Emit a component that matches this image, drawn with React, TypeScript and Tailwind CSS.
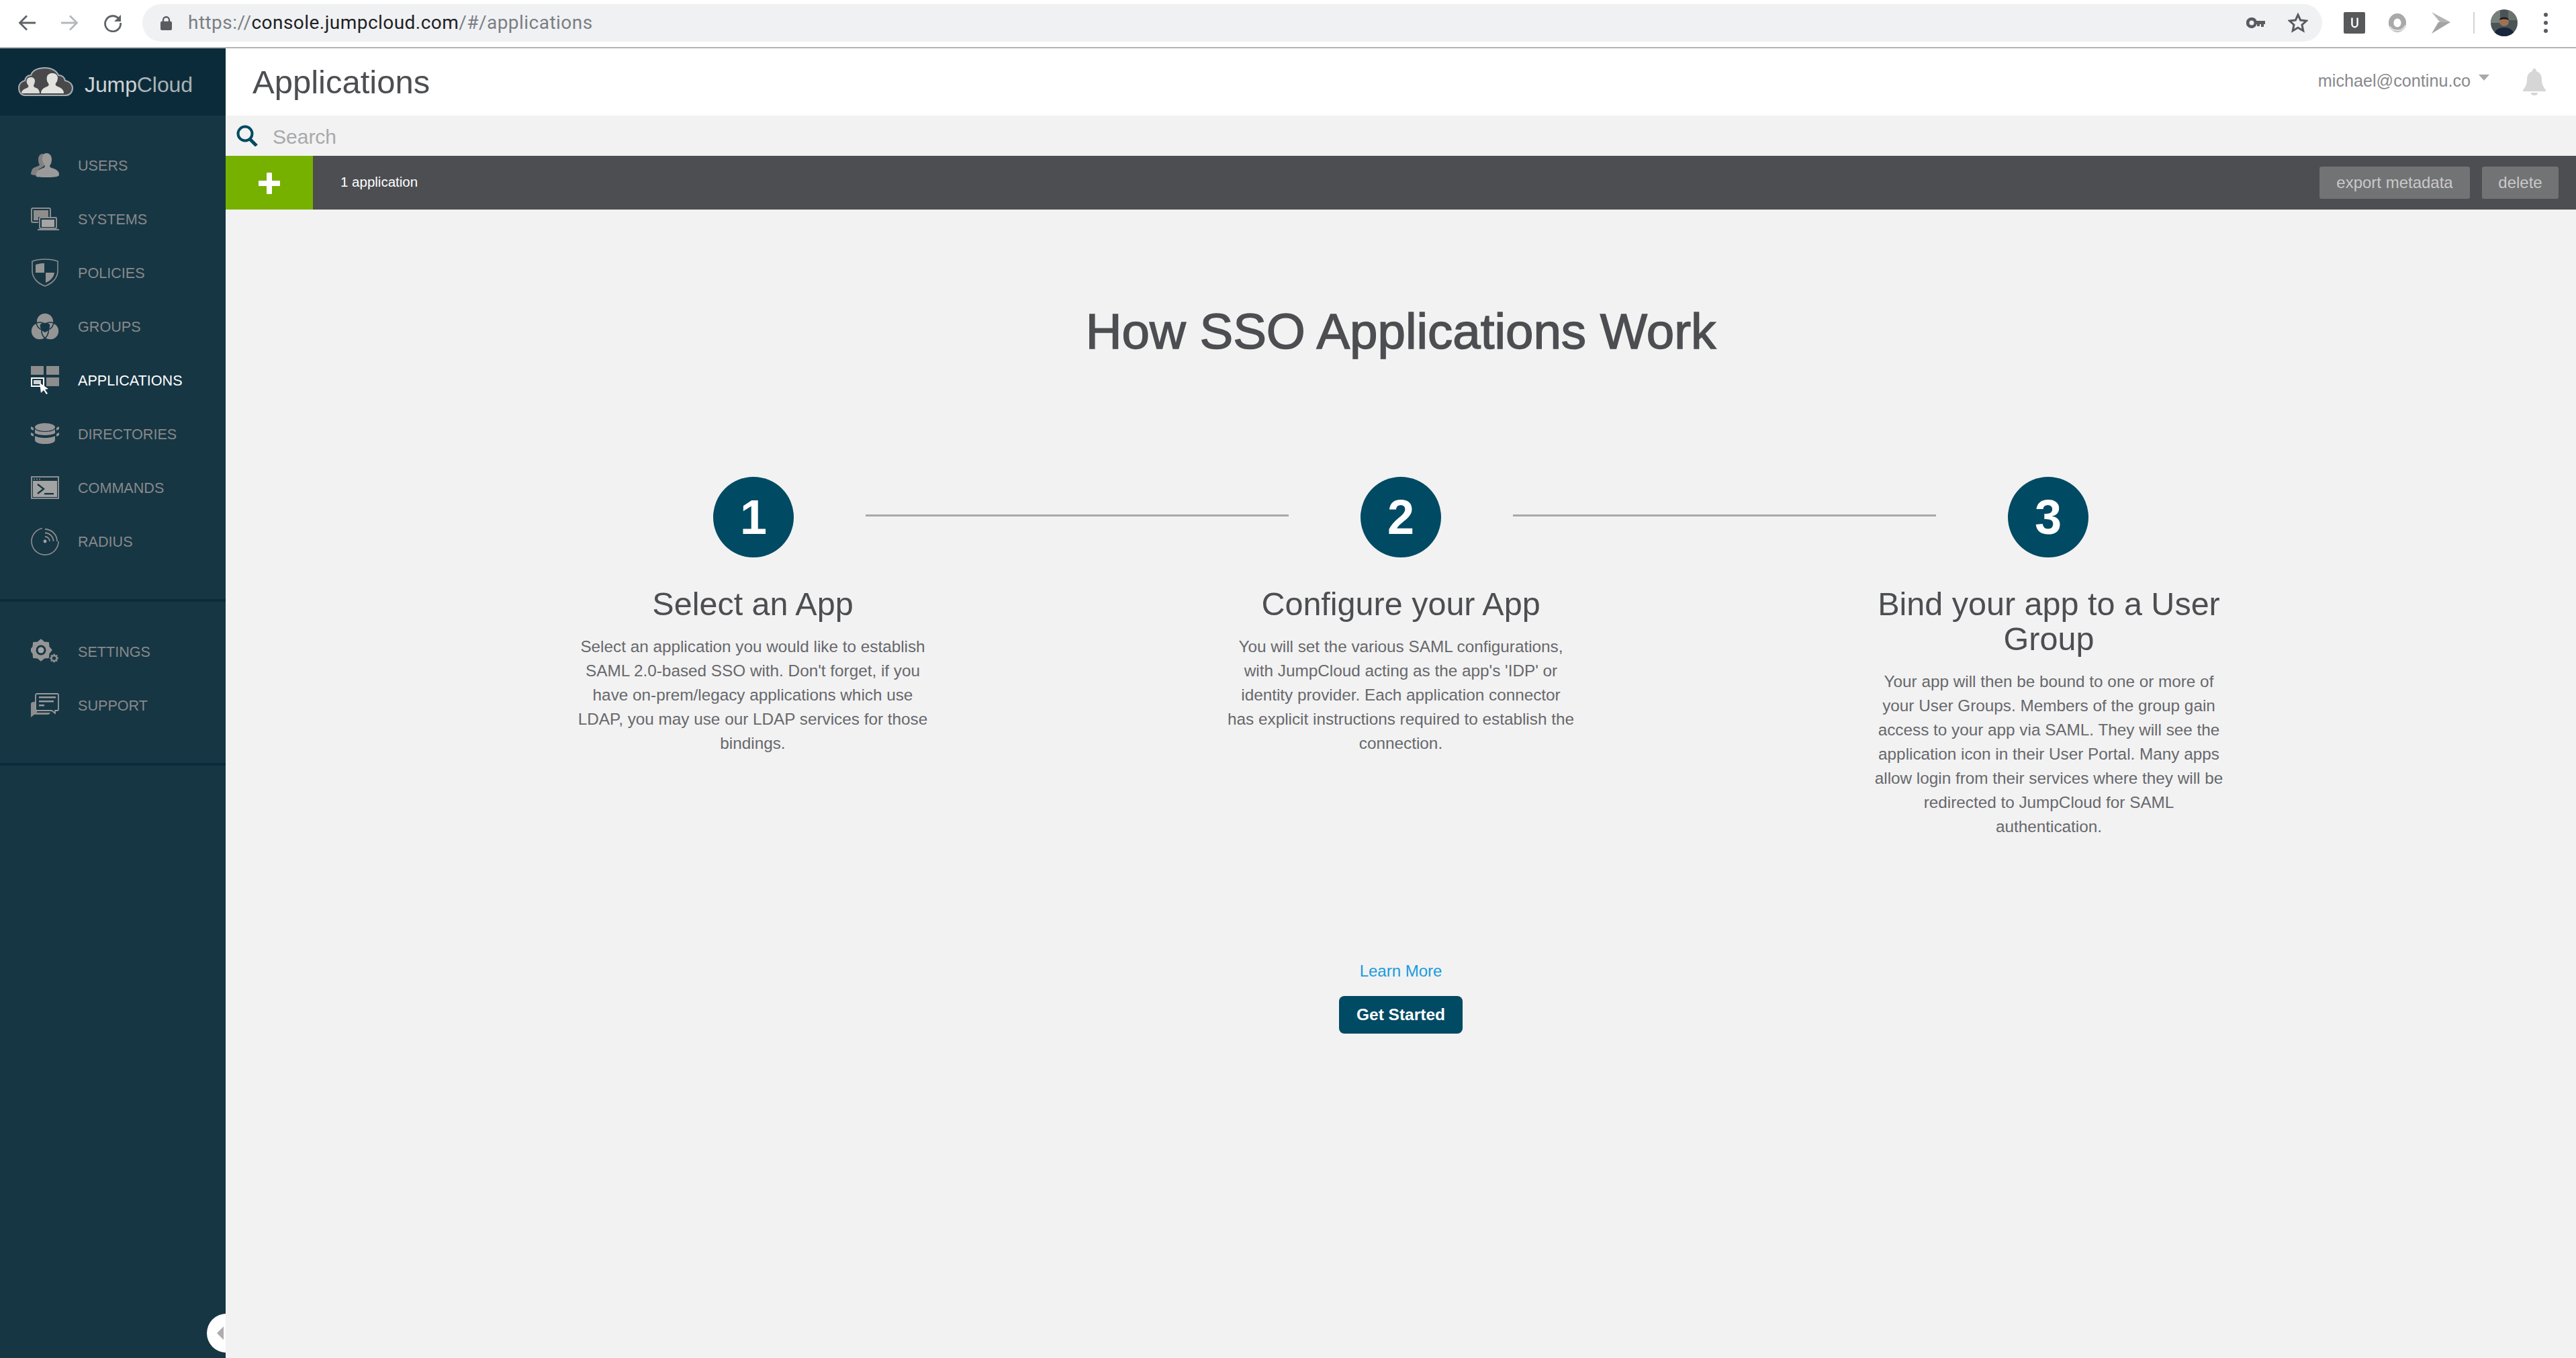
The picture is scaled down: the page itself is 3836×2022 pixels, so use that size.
import React from 'react'

const navIconClass = 'w-[42px] h-[42px] shrink-0'

function UsersIcon() {
  return (
    <svg viewBox="0 0 42 36" className={navIconClass} fill="#9a9a9a">
      <path fill="#808080" d="M18 1c-5 0-7 4-7 9 0 3 1 6 2 8-3 2-9 3-11 6-1 2-2 6-2 7 0 1 4 2 8 2l4-9 8-5V2z" />
      <path d="M23 0c5 0 8 4 8 9 0 4-1 7-3 10 0 2 2 3 6 4 5 2 8 4 8 9 0 3-4 4-20 4S7 35 8 32c0-5 3-7 8-9 3-1 5-2 5-4-2-3-4-6-4-10 0-5 2-9 6-9z" />
    </svg>
  )
}

function SystemsIcon() {
  return (
    <svg viewBox="0 0 42 34" className={navIconClass}>
      <rect x="1" y="1" width="28" height="21" rx="2" fill="none" stroke="#8d8d8d" strokeWidth="2" />
      <rect x="4" y="4" width="22" height="15" fill="#8d8d8d" />
      <rect x="11" y="14" width="26" height="17" fill="#173644" />
      <rect x="13" y="15" width="25" height="16" rx="1" fill="none" stroke="#8d8d8d" strokeWidth="2" />
      <rect x="16" y="18" width="19" height="11" fill="#a5a5a5" />
      <rect x="10" y="32" width="32" height="2" fill="#8d8d8d" />
    </svg>
  )
}

function PoliciesIcon() {
  return (
    <svg viewBox="0 0 42 42" className={navIconClass}>
      <path d="M21 1c7 0 14 1 19 3v14c0 11-8 19-19 23C10 37 2 29 2 18V4C7 2 14 1 21 1z" fill="none" stroke="#8d8d8d" strokeWidth="1.6" />
      <path d="M7 9c4-1 7-2 13-2v14H7z" fill="#959595" />
      <path d="M22 21h13c-1 7-6 12-13 15z" fill="#959595" />
    </svg>
  )
}

function GroupsIcon() {
  return (
    <svg viewBox="0 0 42 40" className={navIconClass}>
      <circle cx="21" cy="13" r="13" fill="#959595" />
      <circle cx="13" cy="27" r="13" fill="#959595" />
      <circle cx="29" cy="27" r="13" fill="#959595" />
      <circle cx="21" cy="13" r="13" fill="none" stroke="#173644" strokeWidth="1.600" />
      <circle cx="13" cy="27" r="13" fill="none" stroke="#173644" strokeWidth="1.600" />
      <circle cx="29" cy="27" r="13" fill="none" stroke="#173644" strokeWidth="1.600" />
      <path d="M14 17c4-3 10-3 14 0 1 4-1 9-7 12-6-3-8-8-7-12z" fill="#173644" />
    </svg>
  )
}

function ApplicationsIcon() {
  return (
    <svg viewBox="0 0 42 42" className={navIconClass}>
      <rect x="0" y="0" width="19" height="13" fill="#8d8d8d" />
      <rect x="23" y="0" width="19" height="13" fill="#8d8d8d" />
      <rect x="23" y="17" width="19" height="13" fill="#8d8d8d" />
      <rect x="1" y="18" width="18" height="12" fill="none" stroke="#fff" strokeWidth="2" />
      <rect x="4" y="21" width="11" height="6" fill="#cfd3d5" />
      <path d="M13 25l13 9-5 1 4 6-2 1-4-6-4 4z" fill="#fff" />
    </svg>
  )
}

function DirectoriesIcon() {
  return (
    <svg viewBox="0 0 42 32" className={navIconClass} fill="#959595">
      <ellipse cx="21" cy="6" rx="15" ry="6" />
      <path d="M6 9c3 3 9 4 15 4s12-1 15-4v6c-3 2-9 3-15 3S9 17 6 15z" />
      <path d="M6 19c3 2 9 3 15 3s12-1 15-3v6c0 4-7 6-15 6S6 29 6 25z" />
      <path d="M0 5l4 2v4l-4-2zM42 5l-4 2v4l4-2zM0 14l4 2v4l-4-2zM42 14l-4 2v4l4-2z" />
    </svg>
  )
}

function CommandsIcon() {
  return (
    <svg viewBox="0 0 42 34" className={navIconClass}>
      <rect x="1" y="1" width="40" height="32" fill="none" stroke="#8d8d8d" strokeWidth="2" />
      <rect x="3" y="7" width="36" height="24" fill="#a3a3a3" />
      <circle cx="5" cy="4.5" r="1" fill="#8d8d8d" />
      <circle cx="9" cy="4.5" r="1" fill="#8d8d8d" />
      <circle cx="13" cy="4.5" r="1" fill="#8d8d8d" />
      <path d="M10 12l9 7-9 7" fill="none" stroke="#173644" strokeWidth="2.4" />
      <rect x="20" y="25" width="14" height="2.4" fill="#173644" />
    </svg>
  )
}

function RadiusIcon() {
  return (
    <svg viewBox="0 0 42 42" className={navIconClass} fill="none" stroke="#8d8d8d">
      <path d="M17 1.500A20 20 0 1 0 41 21" strokeWidth="1.6" />
      <circle cx="21" cy="21" r="2.400" fill="#a3a3a3" stroke="none" />
      <path d="M21 14a7 7 0 0 1 7 7M21 8.500a12.500 12.500 0 0 1 12.500 12.500M21 3a18 18 0 0 1 18 18" strokeWidth="1.800" />
    </svg>
  )
}

function gearPath(cx: number, cy: number, outer: number, inner: number, teeth: number) {
  const points: string[] = []
  for (let i = 0; i < teeth * 2; i++) {
    const a = (i / (teeth * 2)) * Math.PI * 2
    const r = i % 2 === 0 ? outer : inner
    points.push(`${(cx + Math.cos(a) * r).toFixed(2)},${(cy + Math.sin(a) * r).toFixed(2)}`)
  }
  return points.join(' ')
}

function SettingsIcon() {
  return (
    <svg viewBox="0 0 42 34" className={navIconClass}>
      <polygon points={gearPath(15, 15, 15.500, 12.500, 8)} fill="#959595" strokeLinejoin="round" stroke="#959595" strokeWidth="2" />
      <circle cx="15" cy="15" r="7.500" fill="#173644" />
      <circle cx="15" cy="15" r="4.500" fill="#a3a3a3" />
      <polygon points={gearPath(34.500, 27, 7, 5.200, 8)} fill="#8a8a8a" />
      <circle cx="34.500" cy="27" r="2.600" fill="#173644" />
    </svg>
  )
}

function SupportIcon() {
  return (
    <svg viewBox="0 0 42 36" className={navIconClass}>
      <path d="M5 13c-3 0-5 1-5 3v20l5-4h20c2 0 3-1 4-3H9V13z" fill="#8d8d8d" />
      <path d="M9 1h30c1 0 2 1 2 2v21c0 1-1 2-2 2h-3v4l-5-4H9c-1 0-2-1-2-2V3c0-1 1-2 2-2z" fill="#173644" stroke="#9a9a9a" strokeWidth="1.800" />
      <rect x="12" y="5" width="25" height="2.500" fill="#9a9a9a" />
      <rect x="12" y="11" width="22" height="2.500" fill="#9a9a9a" />
      <rect x="12" y="17" width="8" height="2.500" fill="#9a9a9a" />
    </svg>
  )
}

function CloudLogo() {
  return (
    <svg viewBox="0 0 82 44" className="w-[82px] h-[44px] shrink-0">
      <path d="M10 42C4 42 1 37 1 31c0-6 4-10 9-11 1-5 4-8 9-8 2-6 8-11 22-11 8 0 16 4 19 11 5 0 9 3 10 8 6 1 11 5 11 11 0 6-4 11-10 11z" fill="#49494c" stroke="#a6b0b3" strokeWidth="2" />
      <path d="M5 39c0-4 3-6 8-8 2-1 3-2 2-4-2-2-3-5-2-8 1-3 3-4 6-4s6 2 6 5c0 3-1 5-2 7 0 2 1 3 4 4 3 1 5 4 5 8z" fill="#dcdcd8" />
      <path d="M34 39c0-5 3-8 9-10 3-1 3-3 2-5-2-2-3-6-2-10 1-3 4-5 8-5s7 2 8 6c0 4-1 7-3 9-1 2 0 4 3 5 6 2 9 5 9 10z" fill="#e3e3df" />
    </svg>
  )
}

function BackArrow({ color }: { color: string }) {
  return (
    <svg viewBox="0 0 26 24" className="w-[26px] h-[24px]" fill="none" stroke={color} strokeWidth="2.800">
      <path d="M26 12H3M13 1.500L2.500 12 13 22.500" />
    </svg>
  )
}

function ToolbarLeft() {
  return (
    <div className="flex items-center -mt-[2px]">
      <div className="ml-[27px]"><BackArrow color="#5f6368" /></div>
      <div className="ml-[38px] rotate-180"><BackArrow color="#b6b8bb" /></div>
      <svg viewBox="0 0 28 28" className="ml-[37px] w-[28px] h-[28px]" fill="none">
        <path d="M23 8A11.500 11.500 0 1 0 25.500 14" stroke="#5f6368" strokeWidth="2.800" />
        <path d="M26 2v10H16z" fill="#5f6368" />
      </svg>
    </div>
  )
}

function Browser() {
  return (
    <div className="h-[72px] shrink-0 bg-white border-b-2 border-[#b4b4b4] flex items-center">
      <ToolbarLeft />
      <div className="ml-[30px] w-[3246px] h-[56px] rounded-[28px] bg-[#f0f1f3] flex items-center -mt-[2px]">
        <svg viewBox="0 0 18 22" className="ml-[27px] w-[17px] h-[21px]" fill="#5a5b60">
          <path d="M3 9V6a6 6 0 0 1 12 0v3h-2.500V6a3.500 3.500 0 0 0-7 0v3z" />
          <rect x="0" y="8" width="18" height="14" rx="2" />
        </svg>
        <div className="ml-[24px] text-[28px] tracking-[0.46px] font-['Roboto',sans-serif] text-[#7b7e83] whitespace-nowrap">
          https://<span className="text-[#202124]">console.jumpcloud.com</span>/#/applications
        </div>
        <div className="ml-auto flex items-center">
          <svg viewBox="0 0 28 16" className="w-[28px] h-[16px]" fill="#5a5b60">
            <path d="M8 0a8 8 0 0 1 7.500 5H28v5h-2v4h-4v-4h-2v3h-4v-3h-.5A8 8 0 1 1 8 0zm0 4.500a3.500 3.500 0 1 0 0 7 3.500 3.500 0 0 0 0-7z" />
          </svg>
          <svg viewBox="0 0 30 30" className="ml-[34px] mr-[21px] w-[30px] h-[30px]" fill="none" stroke="#5a5b60" strokeWidth="3">
            <path d="M15 3l3.700 8 8.800 1-6.500 6 1.800 8.700L15 22.200l-7.800 4.500L9 18l-6.500-6 8.800-1z" />
          </svg>
        </div>
      </div>
      <div className="flex items-center -mt-[2px]">
        <div className="ml-[32px] w-[32px] h-[32px] rounded-[2px] bg-[#58595b] flex items-center justify-center">
          <svg viewBox="0 0 16 20" className="w-[13px] h-[19px]" fill="none" stroke="#fff" strokeWidth="3">
            <path d="M3 0v12a5 5 0 0 0 10 0V0" />
          </svg>
        </div>
        <svg viewBox="0 0 30 32" className="ml-[34px] w-[28px] h-[30px]" fill="none">
          <ellipse cx="15" cy="16" rx="10" ry="11" stroke="#a9a9a9" strokeWidth="8" />
          <path d="M3 22c3 8 20 10 25-2" stroke="#dcdcdc" strokeWidth="3" />
        </svg>
        <svg viewBox="0 0 30 32" className="ml-[36px] w-[30px] h-[32px]">
          <path d="M1 0l28 15-14 2z" fill="#b5b5b5" />
          <path d="M29 15L1 32l10-17z" fill="#a3a3a3" />
        </svg>
        <div className="ml-[33px] w-[2px] h-[32px] bg-[#d2d3d5]" />
        <svg viewBox="0 0 40 40" className="ml-[24px] w-[40px] h-[40px] rounded-full">
          <rect width="40" height="40" fill="#4a5456" />
          <rect x="0" y="0" width="14" height="20" fill="#77807c" />
          <rect x="26" y="0" width="14" height="16" fill="#6c716c" />
          <path d="M5 40c0-9 6-13 15-13s15 4 15 13z" fill="#17263d" />
          <circle cx="20" cy="18" r="7" fill="#9c7257" />
          <path d="M13 16c0-6 14-6 14 0-4-2-10-2-14 0z" fill="#1e1a18" />
        </svg>
        <div className="ml-[39px] flex flex-col gap-[6px]">
          <span className="w-[6px] h-[6px] rounded-full bg-[#5a5b60]" />
          <span className="w-[6px] h-[6px] rounded-full bg-[#5a5b60]" />
          <span className="w-[6px] h-[6px] rounded-full bg-[#5a5b60]" />
        </div>
      </div>
    </div>
  )
}

const mainNav = [
  { label: 'USERS', icon: <UsersIcon /> },
  { label: 'SYSTEMS', icon: <SystemsIcon /> },
  { label: 'POLICIES', icon: <PoliciesIcon /> },
  { label: 'GROUPS', icon: <GroupsIcon /> },
  { label: 'APPLICATIONS', icon: <ApplicationsIcon />, active: true },
  { label: 'DIRECTORIES', icon: <DirectoriesIcon /> },
  { label: 'COMMANDS', icon: <CommandsIcon /> },
  { label: 'RADIUS', icon: <RadiusIcon /> },
]

const bottomNav = [
  { label: 'SETTINGS', icon: <SettingsIcon /> },
  { label: 'SUPPORT', icon: <SupportIcon /> },
]

function NavItem({ label, icon, active }: { label: string; icon: React.ReactNode; active?: boolean }) {
  return (
    <div className="h-[80px] flex items-center pl-[46px]">
      {icon}
      <span className={`ml-[28px] mt-[2px] text-[21.600px] ${active ? 'text-white' : 'text-[#87898b]'}`}>{label}</span>
    </div>
  )
}

function Sidebar() {
  return (
    <aside className="relative w-[336px] shrink-0 bg-[#173644] flex flex-col">
      <div className="h-[100px] bg-[#0c2b3a] flex items-center pl-[27px]">
        <CloudLogo />
        <span className="ml-[17px] mt-[8px] text-[32px] text-[#cfd3d5] tracking-[-0.1px]">
          Jump<span className="text-[#a9b2b6]">Cloud</span>
        </span>
      </div>
      <nav className="pt-[34px] pb-[46px] border-b-4 border-[#0c2b3a]">
        {mainNav.map(item => (
          <NavItem key={item.label} {...item} />
        ))}
      </nav>
      <nav className="pt-[34px] pb-[46px] border-b-4 border-[#0c2b3a]">
        {bottomNav.map(item => (
          <NavItem key={item.label} {...item} />
        ))}
      </nav>
      <div className="absolute right-0 top-[1884px] w-[28px] h-[58px] overflow-hidden">
        <div className="w-[58px] h-[58px] rounded-full bg-white flex items-center pl-[15px]">
          <div className="w-0 h-0 border-y-[10px] border-y-transparent border-r-[10px] border-r-[#adadad]" />
        </div>
      </div>
    </aside>
  )
}

function Step({ title, children }: { title: string; children: React.ReactNode }) {
  return (
    <div className="w-[965px] flex flex-col items-center text-center">
      <h2 className="w-[530px] text-[48.500px] leading-[52px] text-[#4d4e52]">{title}</h2>
      <p className="mt-[20px] w-[524px] text-[24.300px] leading-[36px] text-[#67686c]">{children}</p>
    </div>
  )
}

function Circle({ n }: { n: number }) {
  return (
    <div className="w-[120px] h-[120px] rounded-full bg-[#004a63] flex items-center justify-center text-white text-[72px] font-bold shrink-0">
      {n}
    </div>
  )
}

function Connector() {
  return <div className="w-[630px] h-[3px] mx-[107px] bg-[#a8a8a8] -mt-[6px] shrink-0" />
}

export default function App() {
  return (
    <div className="w-[3836px] h-[2022px] overflow-hidden flex flex-col bg-white font-['Liberation_Sans',Arial,sans-serif]">
      <Browser />
      <div className="flex flex-1 min-h-0">
        <Sidebar />
        <main className="flex-1 flex flex-col bg-[#f2f2f2]">
          <header className="h-[100px] shrink-0 bg-white flex items-center pl-[40px] pr-[45px]">
            <h1 className="mt-[2px] text-[49px] text-[#4d4e52]">Applications</h1>
            <div className="ml-auto flex items-center">
              <span className="text-[25.200px] text-[#88898c] -mt-[2px]">michael@continu.co</span>
              <div className="ml-[12px] -mt-[14px] w-0 h-0 border-x-[8px] border-x-transparent border-t-[9px] border-t-[#a8a8a8]" />
              <svg viewBox="0 0 34 40" className="ml-[50px] w-[34px] h-[40px]" fill="#d6d6d6">
                <path d="M17 0c2 0 3 2 3 4 6 2 8 7 8 13 0 6 2 10 6 15v2H0v-2c4-5 6-9 6-15 0-6 2-11 8-13 0-2 1-4 3-4z" />
                <path d="M12 36h10c0 3-2 4-5 4s-5-1-5-4z" />
              </svg>
            </div>
          </header>
          <div className="h-[60px] shrink-0 flex items-center pl-[16px]">
            <svg viewBox="0 0 32 32" className="w-[32px] h-[32px]" fill="none" stroke="#004a63" strokeWidth="4">
              <circle cx="13" cy="13" r="10.500" />
              <path d="M20 21l10 10" strokeWidth="5" />
            </svg>
            <span className="ml-[22px] mt-[2px] text-[30px] text-[#a8a9ab]">Search</span>
          </div>
          <div className="h-[80px] shrink-0 bg-[#4d4e52] flex items-center pr-[26px]">
            <div className="w-[130px] h-full bg-[#76b100] flex items-center justify-center">
              <svg viewBox="0 0 32 32" className="mt-[2px] w-[32px] h-[32px]" fill="#fff">
                <path d="M12 1a2 2 0 0 1 2-1h4a2 2 0 0 1 2 1v11h11a1 1 0 0 1 1 1v6a1 1 0 0 1-1 1H20v11a1 1 0 0 1-1 1h-6a1 1 0 0 1-1-1V20H1a1 1 0 0 1-1-1v-6a1 1 0 0 1 1-1h11z" />
              </svg>
            </div>
            <span className="ml-[41px] text-[20.500px] text-white -mt-[1px]">1 application</span>
            <button className="ml-auto h-[48px] w-[224px] rounded-[3px] bg-[#727375] text-[#c9c9c9] text-[24px]">export metadata</button>
            <button className="ml-[18px] h-[48px] w-[114px] rounded-[3px] bg-[#727375] text-[#c9c9c9] text-[24px]">delete</button>
          </div>
          <section className="flex flex-col items-center pt-[140px]">
            <h2 className="text-[74.500px] leading-[84px] text-[#4d4e52] [-webkit-text-stroke:1.500px_#4d4e52]">How SSO Applications Work</h2>
            <div className="mt-[174px] flex items-center">
              <Circle n={1} />
              <Connector />
              <Circle n={2} />
              <Connector />
              <Circle n={3} />
            </div>
            <div className="mt-[43px] flex items-start justify-center">
              <Step title="Select an App">
                Select an application you would like to establish SAML 2.0-based SSO with. Don't forget, if you have on-prem/legacy applications which use LDAP, you may use our LDAP services for those bindings.
              </Step>
              <Step title="Configure your App">
                You will set the various SAML configurations, with JumpCloud acting as the app's 'IDP' or identity provider. Each application connector<br />has explicit instructions required to establish the connection.
              </Step>
              <Step title="Bind your app to a User Group">
                Your app will then be bound to one or more of your User Groups. Members of the group gain access to your app via SAML. They will see the application icon in their User Portal. Many apps allow login from their services where they will be redirected to JumpCloud for SAML authentication.
              </Step>
            </div>
            <a className="mt-[179px] text-[24px] leading-[36px] text-[#1a9be0]">Learn More</a>
            <button className="mt-[19px] w-[184px] h-[56px] rounded-[8px] bg-[#004a63] text-white text-[24.500px] font-bold">Get Started</button>
          </section>
        </main>
      </div>
    </div>
  )
}
